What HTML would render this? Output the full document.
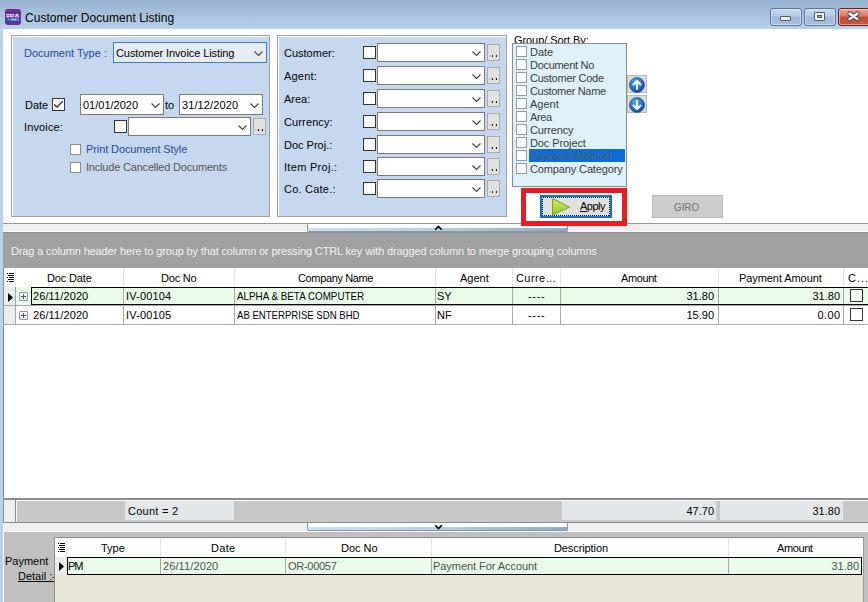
<!DOCTYPE html>
<html><head><meta charset="utf-8">
<style>
*{box-sizing:border-box;margin:0;padding:0}
html,body{width:868px;height:602px;overflow:hidden;background:#fff}
body{position:relative;font-family:"Liberation Sans",sans-serif;font-size:11px;color:#000}
.a{position:absolute}
.t{position:absolute;white-space:nowrap;line-height:13px}
svg{display:block}
</style></head><body>
<div class="a" style="left:0px;top:0px;width:868px;height:29px;background:linear-gradient(#97b3d1,#b9d1ea)"></div>
<div class="a" style="left:0px;top:29px;width:3px;height:573px;background:#b9d1ea"></div>
<svg class="a" style="left:5px;top:9px" width="16" height="16" viewBox="0 0 16 16">
<rect x="0" y="0" width="16" height="16" rx="3.2" fill="#6a2c96"/>
<rect x="1.3" y="5" width="3.2" height="3.2" fill="#f2eef6"/><rect x="1.3" y="6.3" width="3.2" height="0.6" fill="#6a2c96"/>
<rect x="5.2" y="5" width="3.6" height="3.2" fill="#f2eef6"/><rect x="6.2" y="5.9" width="1.6" height="1.4" fill="#6a2c96"/>
<path d="M9.8 8.2 L11.2 4.8 L12.4 4.8 L14.4 8.2 Z" fill="#f2eef6"/><path d="M11.3 8.2 L11.8 6.2 L12.8 8.2 Z" fill="#6a2c96"/>
<path d="M1.5 9 L13.5 9 L15 12 L3 12 Z" fill="#2b82d6"/>
<rect x="6.5" y="10" width="5" height="1.2" fill="#b8d8f4"/>
</svg>
<div class="t" id="t0" style="left:25px;top:12px;font-size:12px;color:#000;letter-spacing:0.042px;">Customer Document Listing</div>
<div class="a" style="left:770px;top:8px;width:32px;height:18px;border:1px solid #5a7394;border-radius:3px;background:linear-gradient(#c5d7ec 0%,#b4cae3 45%,#9fb8d6 50%,#a9c1dd 100%);box-shadow:inset 0 0 0 1px rgba(255,255,255,.45)"></div>
<div class="a" style="left:804px;top:8px;width:32px;height:18px;border:1px solid #5a7394;border-radius:3px;background:linear-gradient(#c5d7ec 0%,#b4cae3 45%,#9fb8d6 50%,#a9c1dd 100%);box-shadow:inset 0 0 0 1px rgba(255,255,255,.45)"></div>
<div class="a" style="left:838px;top:8px;width:40px;height:18px;border:1px solid #6b2218;border-radius:3px;background:linear-gradient(#e8a496 0%,#d77a66 45%,#c24a30 50%,#c9583c 100%);box-shadow:inset 0 0 0 1px rgba(255,255,255,.45)"></div>
<div class="a" style="left:780px;top:16px;width:11px;height:5px;background:#f4f4f4;border:1px solid #4a5a70;border-radius:1px"></div>
<div class="a" style="left:814px;top:12px;width:11px;height:9px;background:#f4f4f4;border:1px solid #4a5a70;border-radius:1px"></div>
<div class="a" style="left:817px;top:15px;width:5px;height:3px;background:#8aa6c8;border:1px solid #4a5a70"></div>
<svg class="a" style="left:846px;top:10px" width="16" height="13" viewBox="0 0 16 13"><path d="M3.6 3.6 L11.4 9 M11.4 3.6 L3.6 9" stroke="#403848" stroke-width="4.4" stroke-linecap="round"/><path d="M3.6 3.6 L11.4 9 M11.4 3.6 L3.6 9" stroke="#f4f4f4" stroke-width="2.6" stroke-linecap="round"/></svg>
<div class="a" style="left:11px;top:35px;width:259px;height:182px;background:#c6d8ef;border:1px solid #a0a0a0;box-shadow:inset 1px 1px 0 #fff"></div>
<div class="a" style="left:277px;top:35px;width:230px;height:182px;background:#c6d8ef;border:1px solid #a0a0a0;box-shadow:inset 1px 1px 0 #fff"></div>
<div class="t" id="t1" style="left:24px;top:47px;font-size:11px;color:#1d4a9e;">Document Type :</div>
<div class="a" style="left:113px;top:42px;width:154px;height:21px;background:#e6ecf3;border:1px solid #3a80c4"></div>
<svg class="a" style="left:254px;top:51px" width="9" height="5" viewBox="0 0 9 5"><path d="M0.5 0.5 L4.5 4.5 L8.5 0.5" stroke="#444" stroke-width="1.1" fill="none"/></svg>
<div class="t" id="t2" style="left:116px;top:47px;font-size:11px;color:#000;letter-spacing:-0.087px;">Customer Invoice Listing</div>
<div class="t" id="t3" style="left:25px;top:99px;font-size:11px;color:#000;">Date</div>
<div class="a" style="left:52px;top:98px;width:13px;height:13px;background:#fff;border:1px solid #333"></div>
<svg class="a" style="left:52px;top:98px" width="13" height="13" viewBox="0 0 13 13"><path d="M2.2 6.4 L5 9 L10.8 3.3" stroke="#333" stroke-width="1.4" fill="none"/></svg>
<div class="a" style="left:80px;top:94px;width:84px;height:21px;background:#fff;border:1px solid #7a7a7a"></div>
<svg class="a" style="left:151px;top:103px" width="9" height="5" viewBox="0 0 9 5"><path d="M0.5 0.5 L4.5 4.5 L8.5 0.5" stroke="#444" stroke-width="1.1" fill="none"/></svg>
<div class="t" id="t4" style="left:83px;top:99px;font-size:11px;color:#000;">01/01/2020</div>
<div class="t" id="t5" style="left:165px;top:99px;font-size:11px;color:#000;">to</div>
<div class="a" style="left:179px;top:94px;width:84px;height:21px;background:#fff;border:1px solid #7a7a7a"></div>
<svg class="a" style="left:250px;top:103px" width="9" height="5" viewBox="0 0 9 5"><path d="M0.5 0.5 L4.5 4.5 L8.5 0.5" stroke="#444" stroke-width="1.1" fill="none"/></svg>
<div class="t" id="t6" style="left:182px;top:99px;font-size:11px;color:#000;letter-spacing:0.111px;">31/12/2020</div>
<div class="t" id="t7" style="left:24px;top:121px;font-size:11px;color:#000;letter-spacing:0.143px;">Invoice:</div>
<div class="a" style="left:114px;top:120px;width:13px;height:13px;background:#fff;border:1px solid #333"></div>
<div class="a" style="left:128px;top:117px;width:123px;height:19px;background:#fff;border:1px solid #7a7a7a"></div>
<svg class="a" style="left:238px;top:125px" width="9" height="5" viewBox="0 0 9 5"><path d="M0.5 0.5 L4.5 4.5 L8.5 0.5" stroke="#444" stroke-width="1.1" fill="none"/></svg>
<div class="a" style="left:253px;top:118px;width:13px;height:17px;background:#e1e1e1;border:1px solid #ababab"></div>
<div class="a" style="left:255px;top:129px;width:1px;height:2px;background:#9fd4e4"></div>
<div class="a" style="left:258px;top:129px;width:1px;height:2px;background:#1a1040"></div>
<div class="a" style="left:262px;top:129px;width:1px;height:2px;background:#1a1040"></div>
<div class="a" style="left:257px;top:129px;width:1px;height:2px;background:#d8b070;opacity:.6"></div>
<div class="a" style="left:261px;top:129px;width:1px;height:2px;background:#d8b070;opacity:.6"></div>
<div class="a" style="left:70px;top:144px;width:11px;height:11px;background:#fff;border:1px solid #8a8a8a"></div>
<div class="t" id="t8" style="left:86px;top:143px;font-size:11px;color:#1f4a9e;letter-spacing:-0.105px;">Print Document Style</div>
<div class="a" style="left:70px;top:162px;width:11px;height:11px;background:#fff;border:1px solid #8a8a8a"></div>
<div class="t" id="t9" style="left:86px;top:161px;font-size:11px;color:#555;letter-spacing:-0.192px;">Include Cancelled Documents</div>
<div class="t" id="t10" style="left:284px;top:47px;font-size:11px;color:#000;">Customer:</div>
<div class="a" style="left:363px;top:46px;width:13px;height:13px;background:#fff;border:1px solid #333"></div>
<div class="a" style="left:377px;top:43px;width:108px;height:19px;background:#fff;border:1px solid #7a7a7a"></div>
<svg class="a" style="left:472px;top:51px" width="9" height="5" viewBox="0 0 9 5"><path d="M0.5 0.5 L4.5 4.5 L8.5 0.5" stroke="#444" stroke-width="1.1" fill="none"/></svg>
<div class="a" style="left:487px;top:44px;width:13px;height:17px;background:#e1e1e1;border:1px solid #ababab"></div>
<div class="a" style="left:489px;top:55px;width:1px;height:2px;background:#9fd4e4"></div>
<div class="a" style="left:492px;top:55px;width:1px;height:2px;background:#1a1040"></div>
<div class="a" style="left:496px;top:55px;width:1px;height:2px;background:#1a1040"></div>
<div class="a" style="left:491px;top:55px;width:1px;height:2px;background:#d8b070;opacity:.6"></div>
<div class="a" style="left:495px;top:55px;width:1px;height:2px;background:#d8b070;opacity:.6"></div>
<div class="t" id="t11" style="left:284px;top:70px;font-size:11px;color:#000;letter-spacing:0.200px;">Agent:</div>
<div class="a" style="left:363px;top:69px;width:13px;height:13px;background:#fff;border:1px solid #333"></div>
<div class="a" style="left:377px;top:66px;width:108px;height:19px;background:#fff;border:1px solid #7a7a7a"></div>
<svg class="a" style="left:472px;top:74px" width="9" height="5" viewBox="0 0 9 5"><path d="M0.5 0.5 L4.5 4.5 L8.5 0.5" stroke="#444" stroke-width="1.1" fill="none"/></svg>
<div class="a" style="left:487px;top:67px;width:13px;height:17px;background:#e1e1e1;border:1px solid #ababab"></div>
<div class="a" style="left:489px;top:78px;width:1px;height:2px;background:#9fd4e4"></div>
<div class="a" style="left:492px;top:78px;width:1px;height:2px;background:#1a1040"></div>
<div class="a" style="left:496px;top:78px;width:1px;height:2px;background:#1a1040"></div>
<div class="a" style="left:491px;top:78px;width:1px;height:2px;background:#d8b070;opacity:.6"></div>
<div class="a" style="left:495px;top:78px;width:1px;height:2px;background:#d8b070;opacity:.6"></div>
<div class="t" id="t12" style="left:284px;top:93px;font-size:11px;color:#000;">Area:</div>
<div class="a" style="left:363px;top:92px;width:13px;height:13px;background:#fff;border:1px solid #333"></div>
<div class="a" style="left:377px;top:89px;width:108px;height:19px;background:#fff;border:1px solid #7a7a7a"></div>
<svg class="a" style="left:472px;top:97px" width="9" height="5" viewBox="0 0 9 5"><path d="M0.5 0.5 L4.5 4.5 L8.5 0.5" stroke="#444" stroke-width="1.1" fill="none"/></svg>
<div class="a" style="left:487px;top:90px;width:13px;height:17px;background:#e1e1e1;border:1px solid #ababab"></div>
<div class="a" style="left:489px;top:101px;width:1px;height:2px;background:#9fd4e4"></div>
<div class="a" style="left:492px;top:101px;width:1px;height:2px;background:#1a1040"></div>
<div class="a" style="left:496px;top:101px;width:1px;height:2px;background:#1a1040"></div>
<div class="a" style="left:491px;top:101px;width:1px;height:2px;background:#d8b070;opacity:.6"></div>
<div class="a" style="left:495px;top:101px;width:1px;height:2px;background:#d8b070;opacity:.6"></div>
<div class="t" id="t13" style="left:284px;top:116px;font-size:11px;color:#000;letter-spacing:0.125px;">Currency:</div>
<div class="a" style="left:363px;top:115px;width:13px;height:13px;background:#fff;border:1px solid #333"></div>
<div class="a" style="left:377px;top:112px;width:108px;height:19px;background:#fff;border:1px solid #7a7a7a"></div>
<svg class="a" style="left:472px;top:120px" width="9" height="5" viewBox="0 0 9 5"><path d="M0.5 0.5 L4.5 4.5 L8.5 0.5" stroke="#444" stroke-width="1.1" fill="none"/></svg>
<div class="a" style="left:487px;top:113px;width:13px;height:17px;background:#e1e1e1;border:1px solid #ababab"></div>
<div class="a" style="left:489px;top:124px;width:1px;height:2px;background:#9fd4e4"></div>
<div class="a" style="left:492px;top:124px;width:1px;height:2px;background:#1a1040"></div>
<div class="a" style="left:496px;top:124px;width:1px;height:2px;background:#1a1040"></div>
<div class="a" style="left:491px;top:124px;width:1px;height:2px;background:#d8b070;opacity:.6"></div>
<div class="a" style="left:495px;top:124px;width:1px;height:2px;background:#d8b070;opacity:.6"></div>
<div class="t" id="t14" style="left:284px;top:139px;font-size:11px;color:#000;">Doc Proj.:</div>
<div class="a" style="left:363px;top:138px;width:13px;height:13px;background:#fff;border:1px solid #333"></div>
<div class="a" style="left:377px;top:135px;width:108px;height:19px;background:#fff;border:1px solid #7a7a7a"></div>
<svg class="a" style="left:472px;top:143px" width="9" height="5" viewBox="0 0 9 5"><path d="M0.5 0.5 L4.5 4.5 L8.5 0.5" stroke="#444" stroke-width="1.1" fill="none"/></svg>
<div class="a" style="left:487px;top:136px;width:13px;height:17px;background:#e1e1e1;border:1px solid #ababab"></div>
<div class="a" style="left:489px;top:147px;width:1px;height:2px;background:#9fd4e4"></div>
<div class="a" style="left:492px;top:147px;width:1px;height:2px;background:#1a1040"></div>
<div class="a" style="left:496px;top:147px;width:1px;height:2px;background:#1a1040"></div>
<div class="a" style="left:491px;top:147px;width:1px;height:2px;background:#d8b070;opacity:.6"></div>
<div class="a" style="left:495px;top:147px;width:1px;height:2px;background:#d8b070;opacity:.6"></div>
<div class="t" id="t15" style="left:284px;top:161px;font-size:11px;color:#000;letter-spacing:0.300px;">Item Proj.:</div>
<div class="a" style="left:363px;top:160px;width:13px;height:13px;background:#fff;border:1px solid #333"></div>
<div class="a" style="left:377px;top:157px;width:108px;height:19px;background:#fff;border:1px solid #7a7a7a"></div>
<svg class="a" style="left:472px;top:165px" width="9" height="5" viewBox="0 0 9 5"><path d="M0.5 0.5 L4.5 4.5 L8.5 0.5" stroke="#444" stroke-width="1.1" fill="none"/></svg>
<div class="a" style="left:487px;top:158px;width:13px;height:17px;background:#e1e1e1;border:1px solid #ababab"></div>
<div class="a" style="left:489px;top:169px;width:1px;height:2px;background:#9fd4e4"></div>
<div class="a" style="left:492px;top:169px;width:1px;height:2px;background:#1a1040"></div>
<div class="a" style="left:496px;top:169px;width:1px;height:2px;background:#1a1040"></div>
<div class="a" style="left:491px;top:169px;width:1px;height:2px;background:#d8b070;opacity:.6"></div>
<div class="a" style="left:495px;top:169px;width:1px;height:2px;background:#d8b070;opacity:.6"></div>
<div class="t" id="t16" style="left:284px;top:183px;font-size:11px;color:#000;letter-spacing:0.222px;">Co. Cate.:</div>
<div class="a" style="left:363px;top:182px;width:13px;height:13px;background:#fff;border:1px solid #333"></div>
<div class="a" style="left:377px;top:179px;width:108px;height:19px;background:#fff;border:1px solid #7a7a7a"></div>
<svg class="a" style="left:472px;top:187px" width="9" height="5" viewBox="0 0 9 5"><path d="M0.5 0.5 L4.5 4.5 L8.5 0.5" stroke="#444" stroke-width="1.1" fill="none"/></svg>
<div class="a" style="left:487px;top:180px;width:13px;height:17px;background:#e1e1e1;border:1px solid #ababab"></div>
<div class="a" style="left:489px;top:191px;width:1px;height:2px;background:#9fd4e4"></div>
<div class="a" style="left:492px;top:191px;width:1px;height:2px;background:#1a1040"></div>
<div class="a" style="left:496px;top:191px;width:1px;height:2px;background:#1a1040"></div>
<div class="a" style="left:491px;top:191px;width:1px;height:2px;background:#d8b070;opacity:.6"></div>
<div class="a" style="left:495px;top:191px;width:1px;height:2px;background:#d8b070;opacity:.6"></div>
<div style="position:absolute;left:513px;top:30px;width:100px;height:13px;overflow:hidden">
<div class="t" id="t17" style="left:1px;top:4px;font-size:11px;color:#000;letter-spacing:-0.071px;">Group/ Sort By:</div>
</div>
<div class="a" style="left:512px;top:43px;width:115px;height:144px;background:#dff2fb;border:1px solid #8c8c8c"></div>
<div class="a" style="left:516px;top:46px;width:11px;height:11px;background:#fff;border:1px solid #9a9a9a"></div>
<div class="t" id="t18" style="left:530px;top:46px;font-size:11px;color:#3a3a3a;">Date</div>
<div class="a" style="left:516px;top:59px;width:11px;height:11px;background:#fff;border:1px solid #9a9a9a"></div>
<div class="t" id="t19" style="left:530px;top:59px;font-size:11px;color:#3a3a3a;letter-spacing:-0.300px;">Document No</div>
<div class="a" style="left:516px;top:72px;width:11px;height:11px;background:#fff;border:1px solid #9a9a9a"></div>
<div class="t" id="t20" style="left:530px;top:72px;font-size:11px;color:#3a3a3a;letter-spacing:-0.250px;">Customer Code</div>
<div class="a" style="left:516px;top:85px;width:11px;height:11px;background:#fff;border:1px solid #9a9a9a"></div>
<div class="t" id="t21" style="left:530px;top:85px;font-size:11px;color:#3a3a3a;letter-spacing:-0.333px;">Customer Name</div>
<div class="a" style="left:516px;top:98px;width:11px;height:11px;background:#fff;border:1px solid #9a9a9a"></div>
<div class="t" id="t22" style="left:530px;top:98px;font-size:11px;color:#3a3a3a;">Agent</div>
<div class="a" style="left:516px;top:111px;width:11px;height:11px;background:#fff;border:1px solid #9a9a9a"></div>
<div class="t" id="t23" style="left:530px;top:111px;font-size:11px;color:#3a3a3a;letter-spacing:-0.333px;">Area</div>
<div class="a" style="left:516px;top:124px;width:11px;height:11px;background:#fff;border:1px solid #9a9a9a"></div>
<div class="t" id="t24" style="left:530px;top:124px;font-size:11px;color:#3a3a3a;letter-spacing:-0.143px;">Currency</div>
<div class="a" style="left:516px;top:137px;width:11px;height:11px;background:#fff;border:1px solid #9a9a9a"></div>
<div class="t" id="t25" style="left:530px;top:137px;font-size:11px;color:#3a3a3a;letter-spacing:-0.100px;">Doc Project</div>
<div class="a" style="left:529px;top:149px;width:96px;height:13px;background:#0b6ed8"></div>
<div class="a" style="left:516px;top:150px;width:11px;height:11px;background:#fff;border:1px solid #9a9a9a"></div>
<div class="t" id="t26" style="left:530px;top:150px;font-size:11px;color:#555c66;letter-spacing:-0.154px;">Payment Method</div>
<div class="a" style="left:516px;top:163px;width:11px;height:11px;background:#fff;border:1px solid #9a9a9a"></div>
<div class="t" id="t27" style="left:530px;top:163px;font-size:11px;color:#3a3a3a;letter-spacing:-0.133px;">Company Category</div>
<div class="a" style="left:627px;top:75px;width:20px;height:18px;background:#dcdcdc;border:1px solid #b8b8b8"></div>
<svg class="a" style="left:629px;top:77px" width="16" height="16" viewBox="0 0 16 16"><defs><radialGradient id="g75" cx="0.4" cy="0.3" r="0.7"><stop offset="0" stop-color="#5aa8f0"/><stop offset="1" stop-color="#0a4fb0"/></radialGradient></defs><circle cx="8" cy="8" r="7.5" fill="url(#g75)" stroke="#0a3f90" stroke-width="0.6"/><path d="M8 12 L8 4 M4.5 7.5 L8 4 L11.5 7.5" stroke="#fff" stroke-width="2" fill="none" stroke-linecap="round" stroke-linejoin="round"/></svg>
<div class="a" style="left:627px;top:95px;width:20px;height:18px;background:#dcdcdc;border:1px solid #b8b8b8"></div>
<svg class="a" style="left:629px;top:97px" width="16" height="16" viewBox="0 0 16 16"><defs><radialGradient id="g95" cx="0.4" cy="0.3" r="0.7"><stop offset="0" stop-color="#5aa8f0"/><stop offset="1" stop-color="#0a4fb0"/></radialGradient></defs><circle cx="8" cy="8" r="7.5" fill="url(#g95)" stroke="#0a3f90" stroke-width="0.6"/><path d="M8 4 L8 12 M4.5 8.5 L8 12 L11.5 8.5" stroke="#fff" stroke-width="2" fill="none" stroke-linecap="round" stroke-linejoin="round"/></svg>
<div class="a" style="left:540px;top:195px;width:72px;height:23px;background:#e1e1e1;border:2px solid #0a74d6"></div>
<svg class="a" style="left:542px;top:197px" width="68" height="19" viewBox="0 0 68 19" shape-rendering="crispEdges"><rect x="0.5" y="0.5" width="67" height="18" fill="none" stroke="#000" stroke-width="1" stroke-dasharray="1 1"/></svg>
<svg class="a" style="left:551px;top:197px" width="20" height="20" viewBox="0 0 20 20"><defs><linearGradient id="pg" x1="0" y1="0" x2="0" y2="1"><stop offset="0" stop-color="#d2ea6a"/><stop offset="0.5" stop-color="#b2d84a"/><stop offset="1" stop-color="#86c034"/></linearGradient></defs><path d="M1.5 1.5 L18.5 10 L1.5 18.2 Z" fill="url(#pg)" stroke="#6aa620" stroke-width="1" stroke-linejoin="round"/></svg>
<div class="t" id="t28" style="left:580px;top:200px;font-size:11px;color:#000;letter-spacing:-0.500px;"><u>A</u>pply</div>
<div class="a" style="left:652px;top:195px;width:71px;height:23px;background:#cccccc;border:1px solid #bcbcbc"></div>
<div class="t" id="t29" style="left:674px;top:201px;font-size:11px;color:#707070;transform:scaleX(0.8929);transform-origin:left center;">GIRO</div>
<div class="a" style="left:3px;top:223px;width:865px;height:1px;background:#999"></div>
<div class="a" style="left:3px;top:224px;width:865px;height:7px;background:#efefef"></div>
<div class="a" style="left:3px;top:231px;width:865px;height:1px;background:#fafafa"></div>
<div class="a" style="left:307px;top:224px;width:261px;height:8px;border:1px solid #8c96a0;border-top:none;border-left-width:1.5px;border-right-width:1.5px;border-radius:0 0 2px 2px;background:linear-gradient(#fff 0,#fff 4px,transparent 4px),linear-gradient(90deg,#c8e2f2 0%,#b4d0e2 50%,#8eacc0 100%)"></div>
<svg class="a" style="left:434px;top:225px" width="9" height="6" viewBox="0 0 9 6"><path d="M1.2 4.8 L4.5 1.5 L7.8 4.8" stroke="#000" stroke-width="1.6" fill="none"/></svg>
<div class="a" style="left:521px;top:188px;width:106px;height:38px;border:5px solid #e81c24"></div>
<div class="a" style="left:3px;top:232px;width:865px;height:36px;background:#a0a0a0;border-top:1px solid #8a9098"></div>
<div class="t" id="t30" style="left:11px;top:245px;font-size:11px;color:#f4f4f4;letter-spacing:-0.139px;">Drag a column header here to group by that column or pressing CTRL key with dragged column to merge grouping columns</div>
<div class="a" style="left:3px;top:268px;width:865px;height:254px;background:#fff;border-left:1px solid #8c8c8c"></div>
<svg class="a" style="left:7px;top:273px" width="7" height="10" viewBox="0 0 7 10"><path d="M0 0.5h1M2 0.5h5M1 2.5h1M2 2.5h5M0 4.5h1M2 4.5h5M1 6.5h1M2 6.5h5M0 8.5h1M2 8.5h5" stroke="#000" stroke-width="1" fill="none"/></svg>
<div class="a" style="left:15px;top:268px;width:1px;height:19px;background:#e4e4e4"></div>
<div class="a" style="left:123px;top:268px;width:1px;height:19px;background:#e4e4e4"></div>
<div class="a" style="left:234px;top:268px;width:1px;height:19px;background:#e4e4e4"></div>
<div class="a" style="left:435px;top:268px;width:1px;height:19px;background:#e4e4e4"></div>
<div class="a" style="left:512px;top:268px;width:1px;height:19px;background:#e4e4e4"></div>
<div class="a" style="left:560px;top:268px;width:1px;height:19px;background:#e4e4e4"></div>
<div class="a" style="left:718px;top:268px;width:1px;height:19px;background:#e4e4e4"></div>
<div class="a" style="left:843px;top:268px;width:1px;height:19px;background:#e4e4e4"></div>
<div class="a" style="left:4px;top:287px;width:11px;height:37px;background:#ededed"></div>
<div class="a" style="left:16px;top:287px;width:852px;height:18px;background:#eafbea"></div>
<div class="a" style="left:3px;top:305px;width:865px;height:1px;background:#a8a8a8"></div>
<div class="a" style="left:3px;top:324px;width:865px;height:1px;background:#a8a8a8"></div>
<div class="a" style="left:15px;top:287px;width:1px;height:37px;background:#a8a8a8"></div>
<div class="a" style="left:123px;top:287px;width:1px;height:37px;background:#a8a8a8"></div>
<div class="a" style="left:234px;top:287px;width:1px;height:37px;background:#a8a8a8"></div>
<div class="a" style="left:435px;top:287px;width:1px;height:37px;background:#a8a8a8"></div>
<div class="a" style="left:512px;top:287px;width:1px;height:37px;background:#a8a8a8"></div>
<div class="a" style="left:560px;top:287px;width:1px;height:37px;background:#a8a8a8"></div>
<div class="a" style="left:718px;top:287px;width:1px;height:37px;background:#a8a8a8"></div>
<div class="a" style="left:843px;top:287px;width:1px;height:37px;background:#a8a8a8"></div>
<div class="a" style="left:31px;top:287px;width:837px;height:18px;border:1px solid #000;border-right:none"></div>
<svg class="a" style="left:8px;top:293px" width="5" height="9" viewBox="0 0 5 9"><path d="M0 0 L5 4.5 L0 9 Z" fill="#000"/></svg>
<div class="t" id="t31" style="left:47px;top:272px;font-size:11px;color:#000;letter-spacing:-0.143px;">Doc Date</div>
<div class="t" id="t32" style="left:161px;top:272px;font-size:11px;color:#000;letter-spacing:-0.200px;">Doc No</div>
<div class="t" id="t33" style="left:298px;top:272px;font-size:11px;color:#000;letter-spacing:-0.364px;">Company Name</div>
<div class="t" id="t34" style="left:460px;top:272px;font-size:11px;color:#000;">Agent</div>
<div class="t" id="t35" style="left:516px;top:272px;font-size:11px;color:#000;letter-spacing:0.429px;">Curre...</div>
<div class="t" id="t36" style="left:621px;top:272px;font-size:11px;color:#000;letter-spacing:-0.400px;">Amount</div>
<div class="t" id="t37" style="left:739px;top:272px;font-size:11px;color:#000;letter-spacing:-0.077px;">Payment Amount</div>
<div class="t" id="t38" style="left:848px;top:272px;font-size:11px;color:#000;letter-spacing:1.000px;">C...</div>
<div class="a" style="left:19px;top:292px;width:9px;height:9px;background:linear-gradient(#fff,#e4e4e4);border:1px solid #979797;border-radius:1px"></div>
<div class="a" style="left:21px;top:296px;width:5px;height:1px;background:#3a55a5"></div>
<div class="a" style="left:23px;top:294px;width:1px;height:5px;background:#3a55a5"></div>
<div class="a" style="left:19px;top:311px;width:9px;height:9px;background:linear-gradient(#fff,#e4e4e4);border:1px solid #979797;border-radius:1px"></div>
<div class="a" style="left:21px;top:315px;width:5px;height:1px;background:#3a55a5"></div>
<div class="a" style="left:23px;top:313px;width:1px;height:5px;background:#3a55a5"></div>
<div class="t" id="t39" style="left:237px;top:290px;font-size:11px;color:#000;transform:scaleX(0.8944);transform-origin:left center;">ALPHA &amp; BETA COMPUTER</div>
<div class="t" id="t40" style="left:237px;top:309px;font-size:11px;color:#000;transform:scaleX(0.8714);transform-origin:left center;">AB ENTERPRISE SDN BHD</div>
<div class="t" id="t41" style="left:33px;top:290px;font-size:11px;color:#000;letter-spacing:0.111px;">26/11/2020</div>
<div class="t" id="t42" style="left:126px;top:290px;font-size:11px;color:#000;letter-spacing:0.143px;">IV-00104</div>
<div class="t" id="t43" style="left:437px;top:290px;font-size:11px;color:#000;">SY</div>
<div class="t" id="t44" style="left:528px;top:290px;font-size:11px;color:#000;letter-spacing:0.667px;">----</div>
<div class="t" id="t45" style="left:33px;top:309px;font-size:11px;color:#000;letter-spacing:0.111px;">26/11/2020</div>
<div class="t" id="t46" style="left:126px;top:309px;font-size:11px;color:#000;letter-spacing:0.143px;">IV-00105</div>
<div class="t" id="t47" style="left:437px;top:309px;font-size:11px;color:#000;">NF</div>
<div class="t" id="t48" style="left:528px;top:309px;font-size:11px;color:#000;letter-spacing:0.667px;">----</div>
<div class="t" id="t49" style="right:154.000px;top:290px;font-size:11px;color:#000;">31.80</div>
<div class="t" id="t50" style="right:28.000px;top:290px;font-size:11px;color:#000;">31.80</div>
<div class="t" id="t51" style="right:154.000px;top:309px;font-size:11px;color:#000;">15.90</div>
<div class="t" id="t52" style="right:27.667px;top:309px;font-size:11px;color:#000;letter-spacing:0.333px;">0.00</div>
<div class="a" style="left:850px;top:289px;width:13px;height:13px;background:#fff;border:1px solid #333"></div>
<div class="a" style="left:850px;top:308px;width:13px;height:13px;background:#fff;border:1px solid #333"></div>
<div class="a" style="left:3px;top:498px;width:865px;height:2px;background:#8c8c8c"></div>
<div class="a" style="left:4px;top:500px;width:864px;height:1px;background:#fafafa"></div>
<div class="a" style="left:4px;top:501px;width:864px;height:21px;background:#c8c8c8"></div>
<div class="a" style="left:4px;top:500px;width:11px;height:22px;background:#efefef"></div>
<div class="a" style="left:15px;top:500px;width:1px;height:22px;background:#8c8c8c"></div>
<div class="a" style="left:16px;top:500px;width:1px;height:22px;background:#fafafa"></div>
<div class="a" style="left:125px;top:501px;width:109px;height:19px;background:#e4e7ea"></div>
<div class="a" style="left:562px;top:501px;width:154px;height:19px;background:#e4e7ea"></div>
<div class="a" style="left:720px;top:501px;width:123px;height:19px;background:#e4e7ea"></div>
<div class="t" id="t53" style="left:128px;top:505px;font-size:11px;color:#000;letter-spacing:0.250px;">Count = 2</div>
<div class="t" id="t54" style="right:154.000px;top:505px;font-size:11px;color:#000;">47.70</div>
<div class="t" id="t55" style="right:28.000px;top:505px;font-size:11px;color:#000;">31.80</div>
<div class="a" style="left:3px;top:522px;width:865px;height:1px;background:#868c94"></div>
<div class="a" style="left:3px;top:523px;width:865px;height:8px;background:#efefef"></div>
<div class="a" style="left:3px;top:531px;width:865px;height:1px;background:#fafafa"></div>
<div class="a" style="left:307px;top:523px;width:261px;height:8px;border:1px solid #8c96a0;border-top:none;border-left-width:1.5px;border-right-width:1.5px;border-radius:0 0 2px 2px;background:linear-gradient(#fff 0,#fff 4px,transparent 4px),linear-gradient(90deg,#c8e2f2 0%,#b4d0e2 50%,#8eacc0 100%)"></div>
<svg class="a" style="left:434px;top:524px" width="9" height="6" viewBox="0 0 9 6"><path d="M1.2 1.2 L4.5 4.5 L7.8 1.2" stroke="#000" stroke-width="1.6" fill="none"/></svg>
<div class="a" style="left:3px;top:532px;width:865px;height:70px;background:#c0c0c0;border-left:1px solid #fff"></div>
<div class="t" id="t56" style="left:5px;top:555px;font-size:11px;color:#000;">Payment</div>
<div class="t" id="t57" style="left:18px;top:570px;font-size:11px;color:#000;"><u>Detail :-</u></div>
<div class="a" style="left:54px;top:537px;width:810px;height:65px;background:#ebe7d8;border-top:1px solid #8c8c8c;border-left:1px solid #8c8c8c;border-right:1px solid #9a9aa0"></div>
<div class="a" style="left:55px;top:538px;width:808px;height:19px;background:#fff"></div>
<div class="a" style="left:66px;top:538px;width:1px;height:19px;background:#e4e4e4"></div>
<div class="a" style="left:160px;top:538px;width:1px;height:19px;background:#e4e4e4"></div>
<div class="a" style="left:285px;top:538px;width:1px;height:19px;background:#e4e4e4"></div>
<div class="a" style="left:431px;top:538px;width:1px;height:19px;background:#e4e4e4"></div>
<div class="a" style="left:728px;top:538px;width:1px;height:19px;background:#e4e4e4"></div>
<div class="a" style="left:55px;top:557px;width:11px;height:18px;background:#ededed"></div>
<div class="a" style="left:67px;top:557px;width:796px;height:18px;background:#eafbea"></div>
<div class="a" style="left:160px;top:557px;width:1px;height:18px;background:#a8a8a8"></div>
<div class="a" style="left:285px;top:557px;width:1px;height:18px;background:#a8a8a8"></div>
<div class="a" style="left:431px;top:557px;width:1px;height:18px;background:#a8a8a8"></div>
<div class="a" style="left:728px;top:557px;width:1px;height:18px;background:#a8a8a8"></div>
<div class="a" style="left:67px;top:557px;width:795px;height:18px;border:1px solid #000"></div>
<svg class="a" style="left:59px;top:562px" width="5" height="9" viewBox="0 0 5 9"><path d="M0 0 L5 4.5 L0 9 Z" fill="#000"/></svg>
<svg class="a" style="left:58px;top:543px" width="7" height="10" viewBox="0 0 7 10"><path d="M0 0.5h1M2 0.5h5M1 2.5h1M2 2.5h5M0 4.5h1M2 4.5h5M1 6.5h1M2 6.5h5M0 8.5h1M2 8.5h5" stroke="#000" stroke-width="1" fill="none"/></svg>
<div class="t" id="t58" style="left:101px;top:542px;font-size:11px;color:#000;">Type</div>
<div class="t" id="t59" style="left:211px;top:542px;font-size:11px;color:#000;letter-spacing:0.333px;">Date</div>
<div class="t" id="t60" style="left:341px;top:542px;font-size:11px;color:#000;">Doc No</div>
<div class="t" id="t61" style="left:554px;top:542px;font-size:11px;color:#000;letter-spacing:-0.100px;">Description</div>
<div class="t" id="t62" style="left:777px;top:542px;font-size:11px;color:#000;letter-spacing:-0.400px;">Amount</div>
<div class="t" id="t63" style="left:68px;top:560px;font-size:11px;color:#000;letter-spacing:-1.000px;">PM</div>
<div class="t" id="t64" style="left:163px;top:560px;font-size:11px;color:#505050;letter-spacing:0.111px;">26/11/2020</div>
<div class="t" id="t65" style="left:288px;top:560px;font-size:11px;color:#505050;letter-spacing:-0.286px;">OR-00057</div>
<div class="t" id="t66" style="left:433px;top:560px;font-size:11px;color:#505050;letter-spacing:-0.056px;">Payment For Account</div>
<div class="t" id="t67" style="right:9.000px;top:560px;font-size:11px;color:#505050;">31.80</div>
</body></html>
